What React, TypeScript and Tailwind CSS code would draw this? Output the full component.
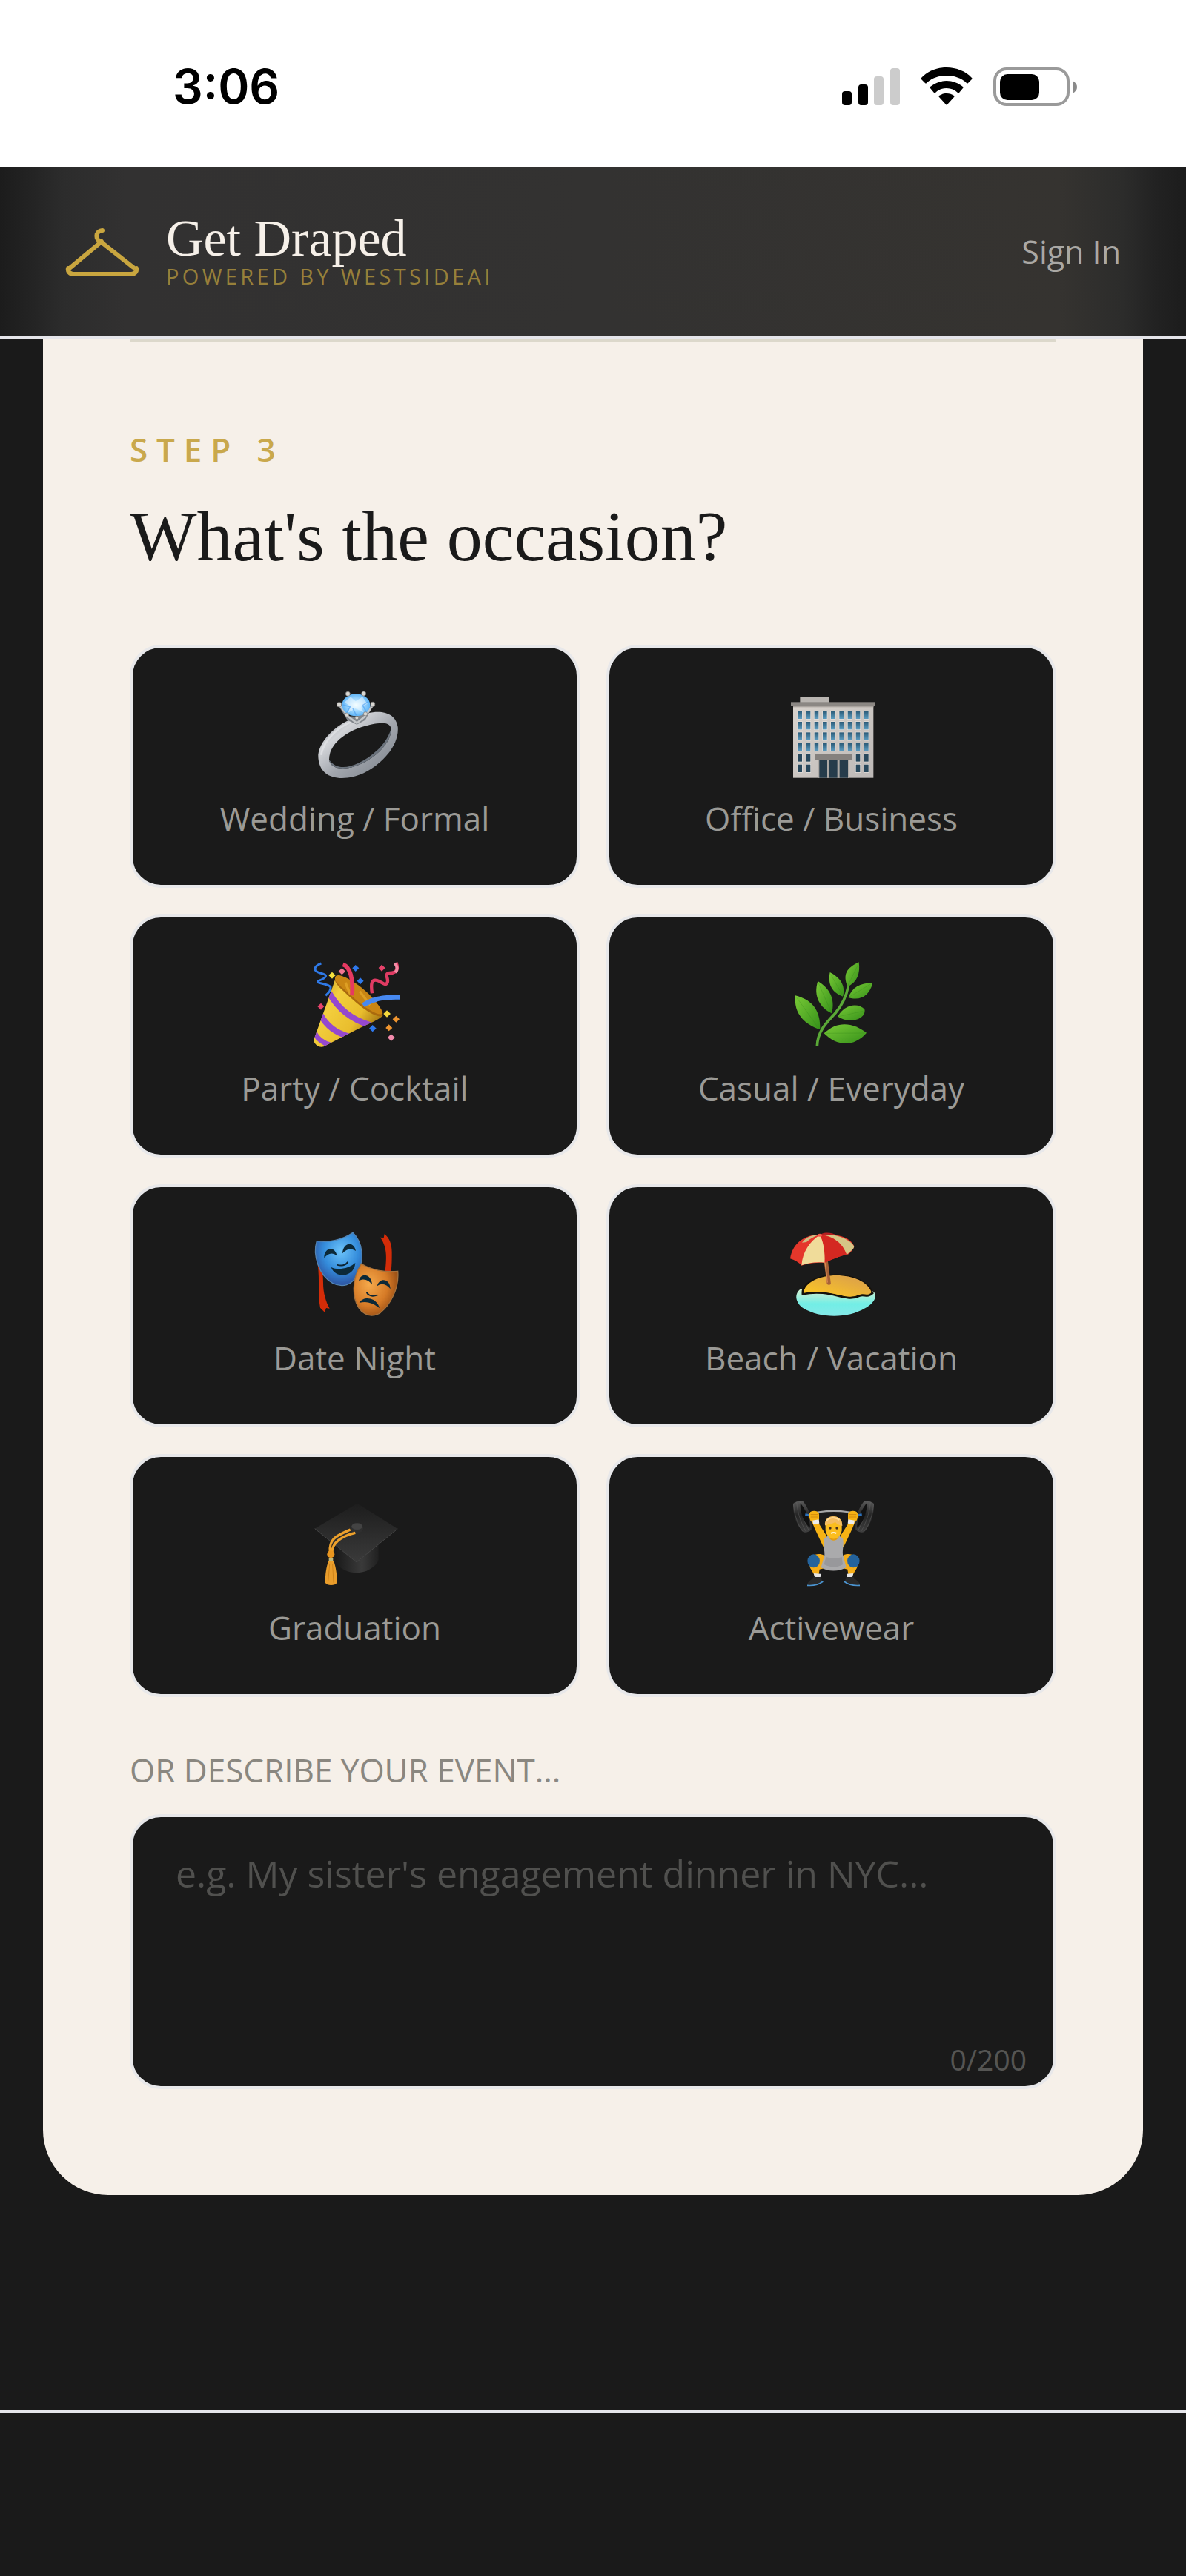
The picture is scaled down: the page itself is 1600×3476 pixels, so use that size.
import { useState, type ReactNode } from "react";

function StatusBar() {
  return (
    <div className="flex h-[225px] items-center justify-between bg-white pr-[146px] pl-[233px] pt-2 font-['Inter',sans-serif] text-black">
      <time className="text-[64px] leading-[72px] font-semibold">3:06</time>
      <div className="flex items-center gap-7">
        <svg className="h-[50px] w-[78px]" viewBox="0 0 78 50" role="img" aria-label="Signal">
          <rect x="0" y="31" width="13" height="19" rx="4" />
          <rect x="22" y="22" width="13" height="28" rx="4" />
          <rect x="43" y="11" width="13" height="39" rx="4" fill="#cccccc" />
          <rect x="65" y="0" width="13" height="50" rx="4" fill="#cccccc" />
        </svg>
        <svg className="h-[51px] w-[70px]" viewBox="0 0 70 51" role="img" aria-label="Wi-Fi">
          <path d="M35 0C22 0 9 5 1 14q-1 1 0 2l5 5q1 1 2 0C15 14 25 11 35 11s20 3 27 10q1 1 2 0l5-5q1-1 0-2C61 5 48 0 35 0Z" />
          <path d="M35 18c-8 0-16 3-22 8q-1 1 0 2l5 6q1 1 2 0c4-4 9-6 15-6s11 2 15 6q1 1 2 0l5-6q1-1 0-2c-6-5-14-8-22-8Z" />
          <path d="M35 35c-4 0-7 1-10 3q-1 1 0 2l9 10q1 1 2 0l9-10q1-1 0-2c-3-2-6-3-10-3Z" />
        </svg>
        <svg className="h-[52px] w-[114px]" viewBox="0 0 114 52" role="img" aria-label="Battery">
          <rect x="2" y="2" width="99" height="48" rx="16" fill="none" stroke="#9a9a9a" strokeWidth="4" />
          <rect x="9" y="9" width="53" height="35" rx="10" />
          <path d="M107 18q6 3 6 8.500t-6 8.500Z" fill="#8a8a8a" />
        </svg>
      </div>
    </div>
  );
}

function Header() {
  return (
    <header className="flex h-[233px] items-center justify-between border-b-4 border-[#e5e5ea] bg-[linear-gradient(90deg,#1c1c1c_0,#232323_40px,#2c2c2c_85px,#323131_170px,#333231_50%,#353330_calc(100%-170px),#2c2c2b_calc(100%-85px),#222222_calc(100%-40px),#1c1c1c_100%)] px-[88px]">
      <a href="#home" className="flex items-center gap-9">
        <svg className="h-[66px] w-[100px]" viewBox="0 0 100 66" fill="none" stroke="#c9a63f" strokeWidth="6" strokeLinecap="round" strokeLinejoin="round" aria-hidden="true">
          <path d="M50 4c-10 1-10 13-1 16L92 54" />
          <path d="M49 19 7 54" />
          <path d="M4 55c-1 4 2 8 7 8h78c5 0 8-4 7-8" />
        </svg>
        <span className="flex flex-col pb-1">
          <span className="font-['Liberation_Serif',serif] text-[70px] leading-[70px] text-[#f6f0e9]">Get Draped</span>
          <span className="text-[29px] leading-8 tracking-[0.15em] text-[#97803a]">POWERED BY WESTSIDEAI</span>
        </span>
      </a>
      <a href="#signin" className="text-[43px] leading-16 text-[#aaa8a4]">Sign In</a>
    </header>
  );
}

function Icon({ box, children }: { box: string; children: ReactNode }) {
  return (
    <svg className="size-[130px]" viewBox={box} aria-hidden="true">
      {children}
    </svg>
  );
}

function Ring() {
  return (
    <Icon box="40 75 390 390">
      <defs>
        <linearGradient id="ringBand" x1="0" y1="0" x2="1" y2="1">
          <stop offset="0" stopColor="#8f949b" />
          <stop offset=".3" stopColor="#d2d4d8" />
          <stop offset=".55" stopColor="#a3a7ae" />
          <stop offset="1" stopColor="#757c85" />
        </linearGradient>
        <radialGradient id="gem">
          <stop offset="0" stopColor="#eafcff" />
          <stop offset=".5" stopColor="#a9dcff" />
          <stop offset="1" stopColor="#5fb4f6" />
        </radialGradient>
      </defs>
      <path fillRule="evenodd" fill="url(#ringBand)" d="M86 352C94 286 170 222 240 200C320 165 398 172 408 240C414 312 350 386 270 427C190 463 84 458 86 352ZM130 372C133 405 180 418 232 400C310 375 385 305 381 245C373 210 310 226 262 240C195 262 130 310 130 372Z" />
      <path d="M130 372c3 33 50 46 102 28 78-25 153-95 149-155-10 42-50 100-130 140-50 24-95 26-121-13Z" fill="#6b737d" />
      <path d="M98 350c12-60 70-112 134-136" fill="none" stroke="#e4e6e8" strokeWidth="8" opacity=".7" strokeLinecap="round" />
      <path d="m166 150 38 62 38 18 34-18 36-64-20 10-46 40-40-2Z" fill="#81868c" />
      <path d="m170 148 38 50 34 26 32-26 36-50" fill="none" stroke="#c4c7ca" strokeWidth="8" />
      <ellipse cx="239" cy="151" rx="57" ry="45" fill="url(#gem)" />
      <path d="m192 140 25-22 20 18 28-18 20 28-25 12 10 23-34-16-30 18 10-28Z" fill="#fff" opacity=".45" />
      <path d="m185 150 30 8-12 22M288 138l-22 14 12 22M226 165l14 28" stroke="#4a9cf0" strokeWidth="5" fill="none" opacity=".6" />
      <g fill="#d9d7d2" stroke="#777" strokeWidth="2">
        <circle cx="206" cy="106" r="9" />
        <circle cx="270" cy="105" r="9" />
        <rect x="162" y="140" width="18" height="18" rx="6" />
        <rect x="298" y="139" width="17" height="18" rx="6" />
        <circle cx="202" cy="191" r="8" />
        <circle cx="277" cy="187" r="8" />
        <circle cx="242" cy="203" r="7" />
      </g>
    </Icon>
  );
}

function Office() {
  return (
    <Icon box="50 75 390 390">
      <defs>
        <linearGradient id="wall" x1="0" y1="0" x2="1" y2="1">
          <stop offset="0" stopColor="#d9d3cd" />
          <stop offset="1" stopColor="#bdb9b7" />
        </linearGradient>
        <linearGradient id="pane" x1="0" y1="0" x2="0" y2="1">
          <stop offset="0" stopColor="#2c5b78" />
          <stop offset="1" stopColor="#5b9cc0" />
        </linearGradient>
      </defs>
      <rect x="117" y="119" width="117" height="24" fill="#b9b5b1" />
      <rect x="89" y="148" width="325" height="298" fill="url(#wall)" />
      <rect x="80" y="139" width="341" height="15" fill="#8b8783" />
      <rect x="89" y="154" width="325" height="6" fill="#aaa49f" />
      {[176, 219, 262, 306, 349, 392].map((y, row) =>
        [108, 142, 175, 209, 242, 276, 310, 343, 377].map((x, col) =>
          row > 3 && col > 1 && col < 7 ? null : (
            <g key={`${x}-${y}`}>
              <rect x={x - 2} y={y - 2} width="21" height="35" fill="#e6e2de" />
              <rect x={x} y={y} width="17" height="31" fill={row > 3 ? "#28485c" : "url(#pane)"} />
            </g>
          ),
        ),
      )}
      <rect x="190" y="368" width="124" height="78" fill="#aca8a4" />
      <rect x="177" y="349" width="151" height="23" fill="#85817e" />
      <rect x="195" y="373" width="32" height="73" fill="#263c4b" />
      <rect x="235" y="373" width="33" height="73" fill="#263c4b" />
      <rect x="277" y="373" width="34" height="73" fill="#263c4b" />
    </Icon>
  );
}

function Party() {
  return (
    <Icon box="40 57 390 390">
      <defs>
        <linearGradient id="cone" x1="0" y1="0" x2="1" y2=".7">
          <stop offset="0" stopColor="#bd8b18" />
          <stop offset=".35" stopColor="#f3cf3e" />
          <stop offset=".7" stopColor="#e9bd2d" />
          <stop offset="1" stopColor="#94650c" />
        </linearGradient>
        <clipPath id="coneShape">
          <path d="M158 140c40 60 120 130 190 158-20 20-60 34-100 54L108 424c-20 6-40-10-40-28l70-196Z" />
        </clipPath>
      </defs>
      <path d="M158 140c40 60 120 130 190 158-20 20-60 34-100 54L108 424c-20 6-40-10-40-28l70-196Z" fill="url(#cone)" />
      <g clipPath="url(#coneShape)" fill="none" stroke="#9548cf" strokeWidth="24">
        <path d="M130 206c35 62 90 108 165 130" />
        <path d="M96 296c24 44 60 72 112 86" />
        <path d="M70 366c12 26 34 44 68 52" strokeWidth="20" />
      </g>
      <path d="M154 148c8-24 58-4 112 46s92 86 78 104c-14 14-70-20-120-66s-74-66-70-84Z" fill="#a96a0e" />
      <path d="M154 148c0-14 12-16 30-9 55 20 140 90 162 148-6 20-68-16-118-62s-74-60-74-77Z" fill="#c98513" />
      <path d="m196 165 20 48M254 200l42 56" stroke="#edb12e" strokeWidth="10" opacity=".6" />
      <path d="M186 91c30 10 42 60 37 126" fill="none" stroke="#e63961" strokeWidth="17" />
      <path d="M304 208c-6-40-2-58 20-52 22 6 34 26 42 8 6-18-16-36 10-38 30 0 35-20 25-42" fill="none" stroke="#df3b63" strokeWidth="13" />
      <path d="M396 86c10 12 12 26 2 38" fill="none" stroke="#f38ba5" strokeWidth="12" />
      <path d="M268 256c40-26 84-34 148-32" fill="none" stroke="#4789f1" strokeWidth="19" />
      <path d="M98 87c-30 12-34 28-8 38 44 8 26 22-2 32-22 12 40 10 48 26 2 12-8 24-20 34" fill="none" stroke="#2f79e6" strokeWidth="9" />
      <g>
        <path d="m142 122 14 13-14 14-14-14Z" fill="#f4df3d" />
        <path d="m182 106 14 13-14 14-14-14Z" fill="#f27692" />
        <path d="m237 93 14 13-14 14-13-14Z" fill="#2e78ec" />
        <path d="m256 145 14 13-14 14-13-14Z" fill="#2e78ec" />
        <path d="m343 92 14 13-14 14-13-14Z" fill="#e6436b" />
        <path d="m97 248 13 13-13 14-14-14Z" fill="#e6436b" />
        <path d="m364 277 15 14-15 14-14-14Z" fill="#f4d83d" />
        <path d="m401 299 14 14-14 13-14-13Z" fill="#ef952f" />
        <path d="m372 334 14 14-14 13-13-13Z" fill="#ef952f" />
        <path d="m381 373 15 14-15 15-14-15Z" fill="#f28bad" />
        <path d="m306 336 15 14-15 14-14-14Z" fill="#2e78ec" />
      </g>
    </Icon>
  );
}

function Leaves() {
  return (
    <Icon box="50 57 390 390">
      <defs>
        <linearGradient id="leaf" x1="0" y1="0" x2="1" y2="1">
          <stop offset="0" stopColor="#78c936" />
          <stop offset="1" stopColor="#36911a" />
        </linearGradient>
      </defs>
      <path d="M186 422c2-60 36-94 74-134 30-36 44-66 52-108" fill="none" stroke="#5aa937" strokeWidth="11" />
      <g fill="url(#leaf)">
        <path d="M98 217c60 16 102 50 100 138-60-20-108-62-100-138Z" />
        <path d="M189 159c44 26 72 68 56 130-46-22-76-68-56-130Z" />
        <path d="M238 123c36 18 66 50 52 98-44-16-62-50-52-98Z" />
        <path d="M355 82c6 46-6 80-46 100-20-52-4-76 46-100Z" />
        <path d="M411 166c-12 48-44 74-98 60 14-42 46-60 98-60Z" />
        <path d="M378 272c8 40-60 62-108 30 22-46 78-60 108-30Z" />
        <path d="M386 368c-52 60-122 54-172 2 56-54 120-42 172-2Z" />
      </g>
      <path d="m104 226 90 126M192 168l52 118M241 131l49 86M352 92l-42 86M402 171l-86 52M372 280l-98 22M376 369l-156 1" fill="none" stroke="#2c8315" strokeWidth="2" opacity=".4" />
    </Icon>
  );
}

function Masks() {
  return (
    <Icon box="40 54 390 390">
      <defs>
        <radialGradient id="blueMask" cx=".55" cy=".35" r=".75">
          <stop offset="0" stopColor="#6cc3fa" />
          <stop offset=".5" stopColor="#348cdb" />
          <stop offset="1" stopColor="#2a3f8c" />
        </radialGradient>
        <radialGradient id="orangeMask" cx=".35" cy=".4" r=".75">
          <stop offset="0" stopColor="#f5a94b" />
          <stop offset=".55" stopColor="#d67b27" />
          <stop offset="1" stopColor="#85400f" />
        </radialGradient>
      </defs>
      <path d="M78 175c24 40 28 70 28 110 0 40 10 74 26 104l-14-2-6 17-18-18c-12-60 2-136-16-211Z" fill="#d42c08" />
      <path d="m337 101 14 2 3-16c20 16 30 42 30 74 0 30 0 55-4 82h-23c4-50 12-98-20-142Z" fill="#d42c08" />
      <path d="M80 116c50 8 104-6 146-34 44 42 44 110 22 162-22 56-68 60-104 42-54-30-82-112-64-170Z" fill="url(#blueMask)" stroke="#5284b4" strokeWidth="4" />
      <path d="M260 208c50 28 94 34 148 30 6 70-30 136-70 168-46 28-90 0-104-58-10-48 0-98 26-140Z" fill="url(#orangeMask)" stroke="#a5713c" strokeWidth="4" />
      <g fill="#0c2938">
        <path d="M110 184c-2-42 44-52 52-8-18-16-36-12-52 8Z" />
        <path d="M184 166c2-44 46-52 54-10-18-12-36-10-54 10Z" />
        <path d="M138 222c30 14 74 4 98-18-4 60-80 66-98 18Z" />
        <path d="M250 276c10-36 52-26 54 16-14-20-34-26-54-16Z" />
        <path d="M324 298c10-38 54-30 54 12-16-20-34-26-54-12Z" />
        <path d="M252 366c20-32 74-18 82 22-28-24-54-30-82-22Z" />
      </g>
      <path d="M162 212c16 6 36 2 44-12M282 324c10 16 28 16 44 10" fill="none" stroke="#0d2534" strokeWidth="6" />
    </Icon>
  );
}

function Beach() {
  return (
    <Icon box="50 54 390 390">
      <defs>
        <linearGradient id="sea" x1="0" y1="0" x2="0" y2="1">
          <stop offset="0" stopColor="#d8f0cf" />
          <stop offset=".55" stopColor="#72eee6" />
          <stop offset="1" stopColor="#85e9e8" />
        </linearGradient>
        <linearGradient id="sand" x1="0" y1="1" x2="1" y2="0">
          <stop offset="0" stopColor="#ffca20" />
          <stop offset="1" stopColor="#d69a50" />
        </linearGradient>
      </defs>
      <path d="M120 310c-30 20-20 58 10 78 70 42 180 42 250 0 50-28 54-66 20-74Z" fill="url(#sea)" />
      <path d="M128 330c-4-42 60-74 136-75 70 0 132 30 146 72-20 20-34 2-52 10-60 30-110-30-230-7Z" fill="url(#sand)" stroke="#15110b" strokeWidth="9" />
      <path d="M132 326c2-42 64-71 132-71 68 0 128 26 142 68-12 8-30 2-50 10-60 24-120-28-224-7Z" fill="url(#sand)" />
      <path d="m214 200 12 90q8 6 16 0l-12-92Z" fill="#a76137" />
      <path d="m218 200 10 84" stroke="#d98a50" strokeWidth="4" />
      <path d="M77 187c10-66 62-98 122-98 68-4 124 12 137 48-2 10-10 20-22 32-28 4-60 18-97 34-30 0-60 0-94 12-10-12-26-22-46-28Z" fill="#e5372b" />
      <path d="M198 90c-42 28-70 68-75 124 30-12 62-14 94-11 4-44-4-82-19-113Z" fill="#f0dc9a" />
      <path d="M125 122c16-22 42-32 68-31-18 6-36 16-50 29Z" fill="#cfbd83" />
      <path d="M200 90c52 4 92 38 106 82 14-16 28-22 30-35-20-30-70-52-136-47Z" fill="#d5c686" />
      <path d="M204 87c20-8 46-4 64 7-20-4-44-6-64-3Z" fill="#b91d20" />
      <path d="M198 91c14 30 20 66 19 112 38-16 62-26 88-32-16-44-48-72-107-80Z" fill="#d42821" />
      <ellipse cx="197" cy="92" rx="9" ry="6" fill="#ef5c4d" />
    </Icon>
  );
}

function Cap() {
  return (
    <Icon box="40 51 390 390">
      <defs>
        <linearGradient id="board" x1="0" y1="0" x2="0" y2="1">
          <stop offset="0" stopColor="#1d1d1d" />
          <stop offset="1" stopColor="#3a3a3a" />
        </linearGradient>
        <linearGradient id="crown" x1="0" y1="0" x2="1" y2="0">
          <stop offset="0" stopColor="#1b1b1b" />
          <stop offset=".6" stopColor="#3a3a3a" />
          <stop offset="1" stopColor="#202020" />
        </linearGradient>
      </defs>
      <path d="M160 262v64c26 36 80 46 122 30 26-12 44-26 48-46v-60Z" fill="url(#crown)" />
      <path d="m72 185 172-102 163 103-166 135Z" fill="url(#board)" />
      <path d="m72 185 169 136 166-135" fill="none" stroke="#444" strokeWidth="3" />
      <ellipse cx="243" cy="184" rx="25" ry="20" fill="#2f2f2f" />
      <ellipse cx="243" cy="176" rx="22" ry="13" fill="#434343" />
      <g fill="none" stroke="#eda02b" strokeWidth="10">
        <path d="M216 189c-54 24-88 36-82 92" />
        <path d="M236 202c-54 12-96 42-94 80" />
      </g>
      <circle cx="137" cy="289" r="15" fill="#e8951f" />
      <rect x="129" y="303" width="17" height="15" fill="#c2b878" />
      <path d="M127 317h22c8 24 14 54 12 88-6 12-40 12-46 0-2-34 4-64 12-88Z" fill="#e99d2b" />
      <path d="m132 330-6 70M144 330l4 74" stroke="#c37712" strokeWidth="2" />
    </Icon>
  );
}

function Lifter() {
  return (
    <Icon box="50 51 390 390">
      <defs>
        <linearGradient id="plate" x1="0" y1="0" x2="0" y2="1">
          <stop offset="0" stopColor="#5a5a5a" />
          <stop offset=".45" stopColor="#242424" />
          <stop offset="1" stopColor="#404040" />
        </linearGradient>
      </defs>
      <path d="M140 130c70-22 156-22 226 0" fill="none" stroke="#a7a7a7" strokeWidth="7" />
      {[0, 1].map((side) => (
        <g key={side} transform={side ? "matrix(-1 0 0 1 505 0)" : undefined}>
          <path d="M89 84c10-10 28-12 40-10 24 30 38 72 34 114-8 10-26 16-34 10-30-32-40-70-40-114Z" fill="url(#plate)" />
          <path d="M91 84c2 40 14 80 36 112M103 78c4 42 16 82 38 118M116 76c6 42 16 80 36 114" fill="none" stroke="#707070" strokeWidth="2" opacity=".6" />
          <path d="M118 82c22 26 38 62 40 100-26-20-42-62-40-100Z" fill="#111" />
          <path d="m138 127 24 6" stroke="#2b70bc" strokeWidth="9" />
          <path d="M156 122c4-12 34-12 38 4v20l-4 14 34 54 6 44-18 2-34-72-12-28c-10-8-14-24-10-38Z" fill="#f6b214" />
          <path d="M160 128h32M160 138h30" stroke="#d38a0c" strokeWidth="3" />
          <path d="m167 152 26-4 2 16-24 5Z" fill="#eee" />
          <path d="M178 290c24-6 42 2 50 20l-8 34-24 6-4 26-16-2-18-30-6-30Z" fill="#f6ad17" />
          <ellipse cx="172" cy="316" rx="25" ry="27" fill="#24639c" />
          <path d="m172 366 28 2v13h-24Z" fill="#e5e5e5" />
          <path d="M174 378c8 6 18 4 26 2l8 20c-18 16-42 18-62 14 2-18 20-20 28-36Z" fill="#292929" />
          <path d="M146 415c26 2 46-2 64-16" fill="none" stroke="#4b94d0" strokeWidth="5" />
        </g>
      ))}
      <path d="m216 224 16-12h40l18 12c6 26-2 44 0 66l14 52c-30 18-74 18-102 0l14-50c2-24-10-42 0-68Z" fill="#aaaaac" />
      <path d="M222 300c24 8 44 8 64 0l4 30c-20 14-50 14-76 0Z" fill="#98989b" />
      <path d="M233 202h40v18c-10 18-30 18-40 0Z" fill="#e49d12" />
      <path d="M220 164c0-38 66-38 66 0v28c-8 46-58 46-66 0Z" fill="#fbbd1e" />
      <path d="M218 172c-6-50 72-50 70 2-12-4-22-6-28-16-14 10-28 6-36 14Z" fill="#f4bc61" />
      <path d="M224 154c12-16 38-16 52-4" fill="none" stroke="#ffe0a0" strokeWidth="5" />
      <circle cx="239" cy="183" r="5" fill="#493019" />
      <circle cx="266" cy="183" r="5" fill="#493019" />
      <path d="M242 204q11-6 22 0" fill="none" stroke="#fff1d0" strokeWidth="6" />
    </Icon>
  );
}

const occasions = [
  { label: "Wedding / Formal", icon: <Ring /> },
  { label: "Office / Business", icon: <Office /> },
  { label: "Party / Cocktail", icon: <Party /> },
  { label: "Casual / Everyday", icon: <Leaves /> },
  { label: "Date Night", icon: <Masks /> },
  { label: "Beach / Vacation", icon: <Beach /> },
  { label: "Graduation", icon: <Cap /> },
  { label: "Activewear", icon: <Lifter /> },
];

export default function App() {
  const [text, setText] = useState("");
  const [picked, setPicked] = useState("");
  return (
    <div className="min-h-screen bg-[#1a1a1a] font-['Open_Sans',sans-serif]">
      <StatusBar />
      <Header />
      <main className="px-[58px] pb-[290px]">
        <section className="rounded-b-[88px] bg-[#f6f0e9] px-[117px] pb-[143px]">
          <hr className="h-1 rounded-full border-0 bg-[#dcd8cb]" />
          <p className="mt-[112px] text-[44px] leading-16 font-semibold tracking-[0.27em] text-[#c9a84c]">STEP 3</p>
          <h1 className="mt-[30px] font-['Liberation_Serif',serif] text-[96px] leading-[112px] text-[#1a1a1a]">What's the occasion?</h1>
          <div className="mt-[90px] grid grid-cols-2 gap-9">
            {occasions.map((o) => (
              <button
                key={o.label}
                type="button"
                aria-pressed={picked === o.label}
                onClick={() => setPicked(o.label)}
                className="flex flex-col items-center gap-4 rounded-[42px] border-4 border-[#e8e8ea] bg-[#1a1a1a] pt-[52px] pb-[58px]"
              >
                {o.icon}
                <span className="text-[44px] leading-16 font-medium text-[#9b9a96]">{o.label}</span>
              </button>
            ))}
          </div>
          <label htmlFor="event" className="mt-[66px] block text-[44px] leading-16 font-medium text-[#8a8780]">
            OR DESCRIBE YOUR EVENT...
          </label>
          <div className="relative mt-7">
            <textarea
              id="event"
              maxLength={200}
              value={text}
              onChange={(e) => setText(e.target.value)}
              placeholder="e.g. My sister's engagement dinner in NYC..."
              className="block h-[371px] w-full resize-none rounded-[42px] border-4 border-[#e8e8ea] bg-[#1a1a1a] px-[58px] py-10 text-[50px] leading-[72px] text-[#f6f0e9] placeholder:text-[#50504e]"
            />
            <span className="absolute right-10 bottom-4 text-[39px] leading-12 text-[#555553]">{text.length}/200</span>
          </div>
        </section>
      </main>
      <footer className="h-[224px] border-t-4 border-[#e5e5ea]" />
    </div>
  );
}
